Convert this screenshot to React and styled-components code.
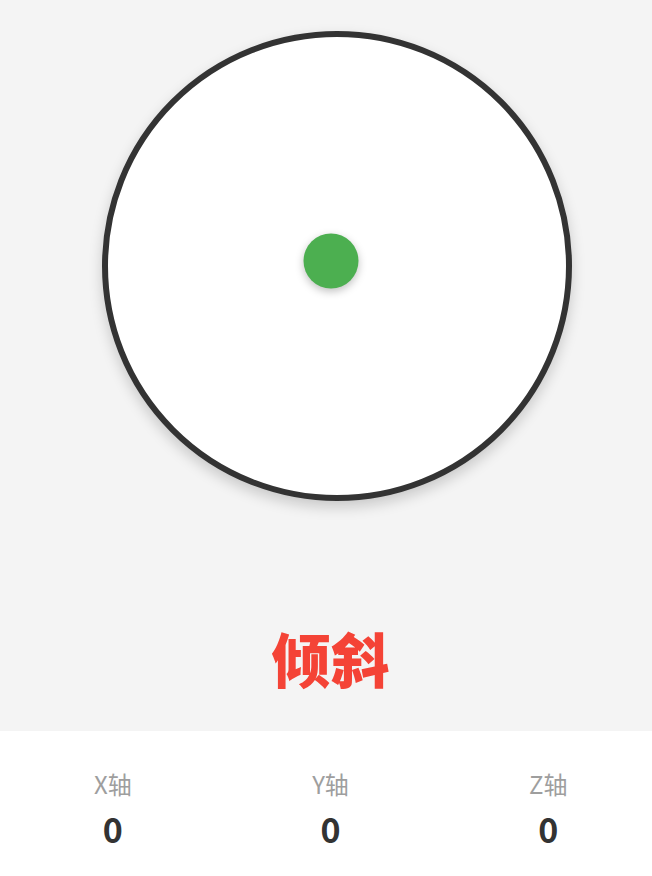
import styled, { createGlobalStyle } from "styled-components";

const GlobalStyle = createGlobalStyle`
  html, body {
    margin: 0;
    padding: 0;
    overflow: hidden;
    background: #ffffff;
    font-family: "Noto Sans CJK SC", "Noto Sans", sans-serif;
  }
`

const Page = styled.div`
  width: 661px;
  display: flex;
  flex-direction: column;
`

const LevelArea = styled.div`
  height: 731px;
  background: #f4f4f4;
  display: flex;
  flex-direction: column;
  align-items: center;
  padding-top: 31px;
  box-sizing: border-box;
`

const Dial = styled.div`
  position: relative;
  width: 470px;
  height: 470px;
  box-sizing: border-box;
  margin-left: 12px;
  border: 6px solid #333333;
  border-radius: 50%;
  background: #ffffff;
  box-shadow: 0 6px 14px rgba(0, 0, 0, 0.18);
`

const Bubble = styled.div`
  position: absolute;
  width: 55px;
  height: 55px;
  border-radius: 50%;
  background: #4caf50;
  box-shadow: 0 3px 8px rgba(0, 0, 0, 0.25);
  transform: translate(-50%, -50%);
`

const Status = styled.div`
  margin-top: 127px;
  font-size: 59px;
  line-height: 1;
  font-weight: 900;
  color: #f44336;
`

const StatRow = styled.div`
  width: 653px;
  margin-left: 4px;
  height: 145px;
  background: #ffffff;
  display: flex;
  padding-top: 38px;
  box-sizing: border-box;
`

const Stat = styled.div`
  flex: 1;
  display: flex;
  flex-direction: column;
  align-items: center;
`

const StatLabel = styled.div`
  font-size: 24px;
  line-height: 30px;
  color: #9e9e9e;
`

const StatValue = styled.div`
  margin-top: 10px;
  font-size: 34px;
  line-height: 40px;
  font-weight: 700;
  color: #333333;
`

const axes = [
  { label: "X轴", value: 0 },
  { label: "Y轴", value: 0 },
  { label: "Z轴", value: 0 },
]

function App() {
  // bubble sits a little off centre: that is the tilt reading
  const tilt = { x: -6, y: -5.5 }
  return (
    <Page>
      <GlobalStyle />
      <LevelArea>
        <Dial>
          <Bubble style={{ left: `calc(50% + ${tilt.x}px)`, top: `calc(50% + ${tilt.y}px)` }} />
        </Dial>
        <Status>倾斜</Status>
      </LevelArea>
      <StatRow>
        {axes.map((a) => (
          <Stat key={a.label}>
            <StatLabel>{a.label}</StatLabel>
            <StatValue>{a.value}</StatValue>
          </Stat>
        ))}
      </StatRow>
    </Page>
  )
}

export default App;
